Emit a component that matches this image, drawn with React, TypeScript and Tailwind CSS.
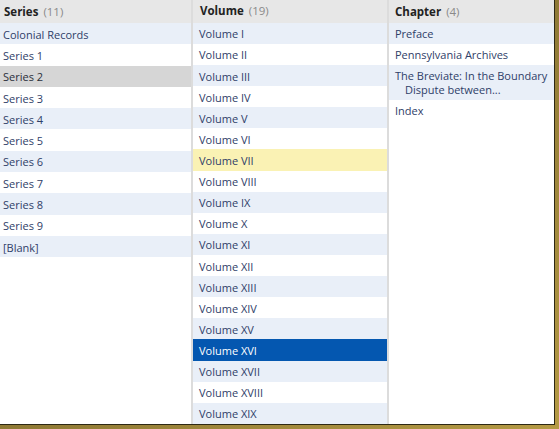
const series = [
  "Colonial Records",
  "Series 1",
  "Series 2",
  "Series 3",
  "Series 4",
  "Series 5",
  "Series 6",
  "Series 7",
  "Series 8",
  "Series 9",
  "[Blank]",
];

const volumes = [
  "I", "II", "III", "IV", "V", "VI", "VII", "VIII", "IX", "X",
  "XI", "XII", "XIII", "XIV", "XV", "XVI", "XVII", "XVIII", "XIX",
].map((n) => `Volume ${n}`);

const chapters = [
  "Preface",
  "Pennsylvania Archives",
  "The Breviate: In the Boundary Dispute between...",
  "Index",
];

type State = "none" | "gray" | "yellow" | "blue";

function rowClass(i: number, state: State) {
  if (state === "gray") return "bg-[#d6d6d6] text-[#2a2f3a]";
  if (state === "yellow") return "bg-[#faf2b4] text-[#2f4068]";
  if (state === "blue") return "bg-[#0457b0] text-white";
  return i % 2 === 0 ? "bg-[#e9eff8] text-[#2f4068]" : "bg-white text-[#2f4068]";
}

function Header({ title, count, pad }: { title: string; count: number; pad: string }) {
  return (
    <div className={`h-[23px] flex items-center bg-[#e7e7e7] text-[11.5px] ${pad}`}>
      <span className="font-bold text-[#222]">{title}</span>
      <span className="ml-[5px] text-[#8a8a8a]">({count})</span>
    </div>
  );
}

export default function App() {
  return (
    <div
      className="w-[559px] h-[429px] bg-gradient-to-br from-[#6b5a26] to-[#b59a44] overflow-hidden"
      style={{ fontFamily: '"Open Sans", "DejaVu Sans", sans-serif' }}
    >
      <div className="w-[555px] h-[425px] bg-white border-r border-b border-[#2e2814] flex text-[11px] leading-[14px]">
        {/* Series */}
        <div className="w-[193px] border-r-2 border-[#dcdcdc] flex flex-col">
          <Header title="Series" count={11} pad="pl-[4px]" />
          {series.map((s, i) => (
            <div
              key={s}
              className={`h-[21.3px] flex items-center pt-[2px] pl-[3px] ${rowClass(i, i === 2 ? "gray" : "none")}`}
            >
              {s}
            </div>
          ))}
        </div>

        {/* Volume */}
        <div className="w-[196px] border-r-2 border-[#dcdcdc] flex flex-col">
          <Header title="Volume" count={19} pad="pl-[7px]" />
          {volumes.map((v, i) => (
            <div
              key={v}
              className={`h-[21.3px] flex items-center pt-[2px] pl-[6px] ${rowClass(
                i,
                i === 6 ? "yellow" : i === 15 ? "blue" : "none"
              )}`}
            >
              {v}
            </div>
          ))}
        </div>

        {/* Chapter */}
        <div className="flex-1 flex flex-col">
          <Header title="Chapter" count={4} pad="pl-[6px]" />
          {chapters.map((c, i) => (
            <div
              key={c}
              className={`pt-[4px] pb-[3px] pl-[16px] pr-[2px] -indent-[10px] ${rowClass(i, "none")}`}
            >
              {c}
            </div>
          ))}
        </div>
      </div>
    </div>
  );
}
